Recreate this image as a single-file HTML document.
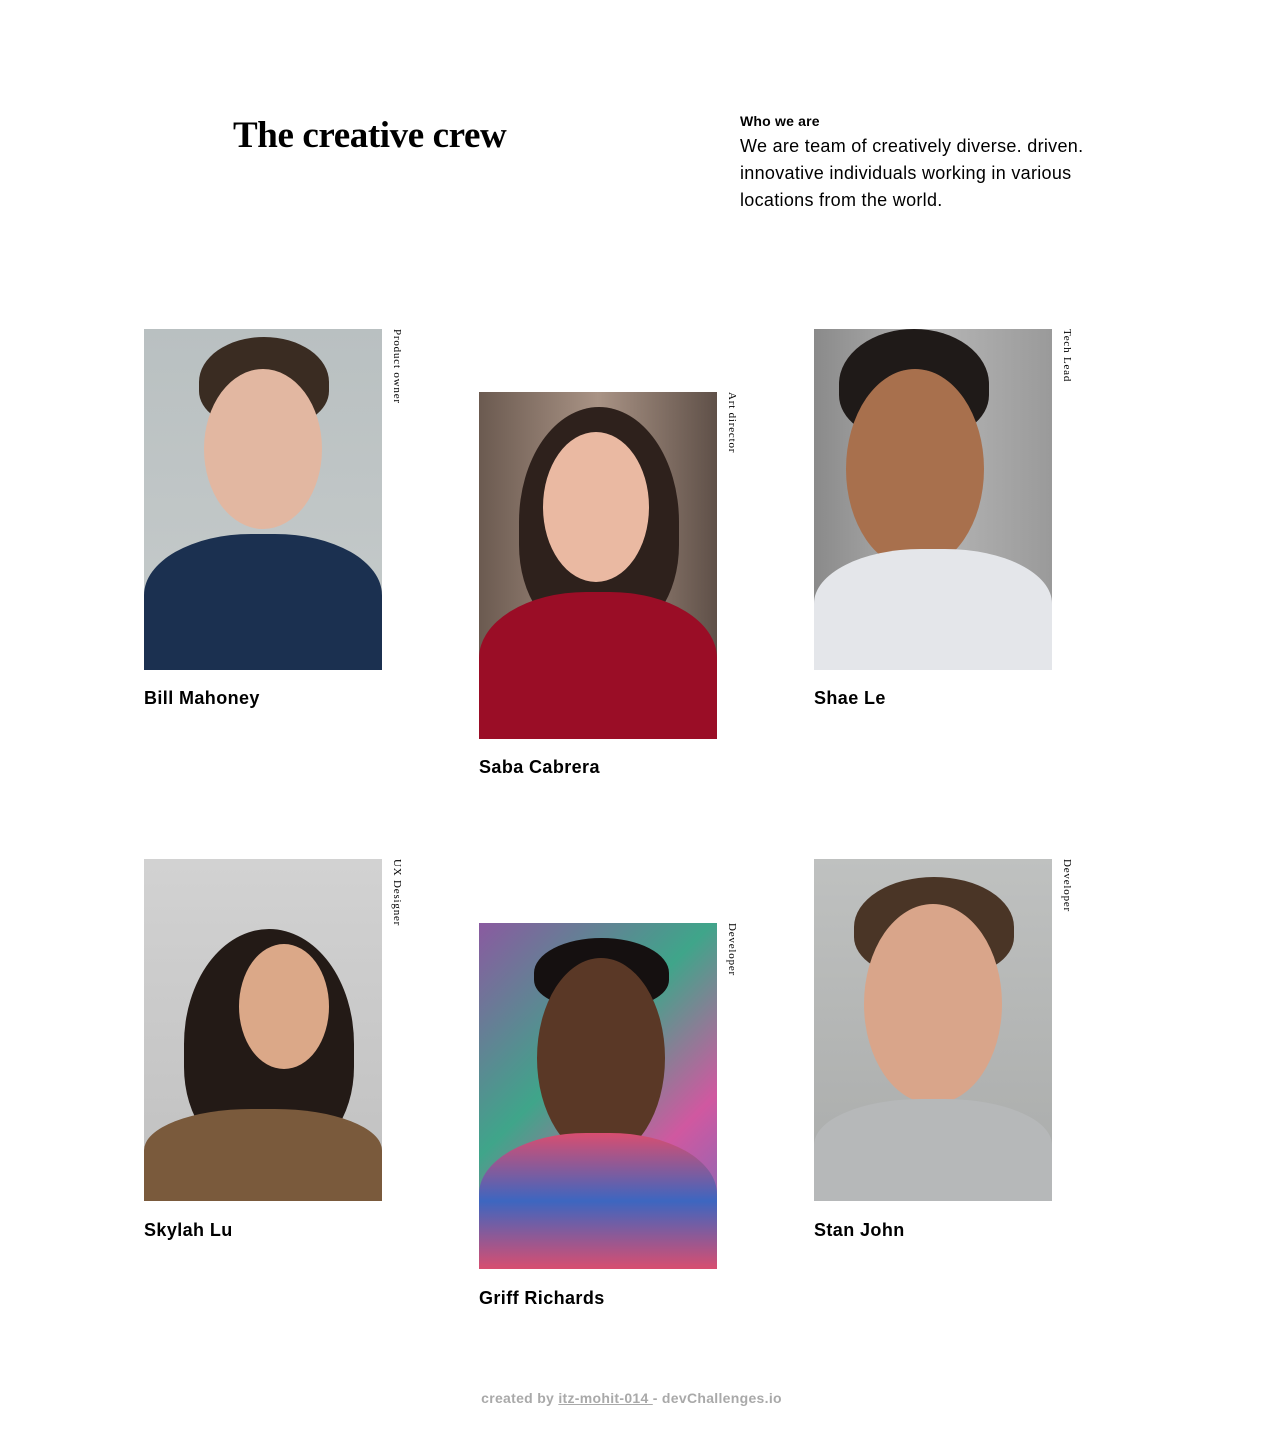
<!DOCTYPE html>
<html><head><meta charset="utf-8"><style>
*{margin:0;padding:0;box-sizing:border-box}
html,body{width:1263px;height:1432px;background:#fff;overflow:hidden}
body{position:relative;font-family:"Liberation Sans",sans-serif;color:#000}
h1{position:absolute;left:233px;top:114px;font-family:"Liberation Serif",serif;font-size:37px;font-weight:700;letter-spacing:-0.4px}
.who{position:absolute;left:740px;top:113px;font-size:14px;font-weight:700;letter-spacing:0.2px}
.desc{position:absolute;left:740px;top:133px;width:375px;font-size:18px;line-height:27px;letter-spacing:0.3px}
.card{position:absolute;width:238px}
.ph{width:238px;position:relative;overflow:hidden}
.role{position:absolute;left:247px;top:0;writing-mode:vertical-rl;font-family:"Liberation Serif",serif;font-size:11px;letter-spacing:0.8px}
.name{position:absolute;left:0;font-size:18px;font-weight:700;white-space:nowrap;letter-spacing:0.4px}
.face{position:absolute;border-radius:50%}
.shirt{position:absolute;left:0;right:0;bottom:0;border-radius:45% 45% 0 0}
.hair{position:absolute;border-radius:50% 50% 40% 40%}
footer{position:absolute;left:0;width:1263px;top:1390px;text-align:center;font-size:14px;font-weight:700;color:#a9a9a9;letter-spacing:0.3px}
footer u{text-decoration:underline}
</style></head><body>
<h1>The creative crew</h1>
<div class="who">Who we are</div>
<div class="desc">We are team of creatively diverse. driven. innovative individuals working in various locations from the world.</div>

<div class="card" style="left:144px;top:329px">
 <div class="ph" style="height:341px;background:linear-gradient(#b9c0c1,#c6cbcb)">
  <div class="hair" style="left:55px;top:8px;width:130px;height:90px;background:#3a2c22"></div>
  <div class="face" style="left:60px;top:40px;width:118px;height:160px;background:#e2b7a1"></div>
  <div class="shirt" style="top:205px;background:#1b3050"></div>
 </div>
 <div class="role">Product owner</div>
 <div class="name" style="top:359px">Bill Mahoney</div>
</div>

<div class="card" style="left:479px;top:392px">
 <div class="ph" style="height:347px;background:linear-gradient(90deg,#6b5a50,#a99385 50%,#5f5048)">
  <div class="hair" style="left:40px;top:15px;width:160px;height:230px;background:#2e211c"></div>
  <div class="face" style="left:64px;top:40px;width:106px;height:150px;background:#eab9a2"></div>
  <div class="shirt" style="top:200px;background:#9a0d26"></div>
 </div>
 <div class="role">Art director</div>
 <div class="name" style="top:365px">Saba Cabrera</div>
</div>

<div class="card" style="left:814px;top:329px">
 <div class="ph" style="height:341px;background:linear-gradient(90deg,#8a8a8a,#b5b5b5 50%,#9a9a9a)">
  <div class="hair" style="left:25px;top:0;width:150px;height:110px;background:#1f1a18"></div>
  <div class="face" style="left:32px;top:40px;width:138px;height:200px;background:#a8704d"></div>
  <div class="shirt" style="top:220px;background:#e4e6ea"></div>
 </div>
 <div class="role">Tech Lead</div>
 <div class="name" style="top:359px">Shae Le</div>
</div>

<div class="card" style="left:144px;top:859px">
 <div class="ph" style="height:342px;background:linear-gradient(#d2d2d2,#c0c0c0)">
  <div class="hair" style="left:40px;top:70px;width:170px;height:230px;background:#231a16"></div>
  <div class="face" style="left:95px;top:85px;width:90px;height:125px;background:#dba888"></div>
  <div class="shirt" style="top:250px;background:#7a5a3c"></div>
 </div>
 <div class="role">UX Designer</div>
 <div class="name" style="top:361px">Skylah Lu</div>
</div>

<div class="card" style="left:479px;top:923px">
 <div class="ph" style="height:346px;background:linear-gradient(135deg,#8a5aa0,#3fa58a 40%,#d058a0 70%,#6a70c0)">
  <div class="hair" style="left:55px;top:15px;width:135px;height:70px;background:#151010"></div>
  <div class="face" style="left:58px;top:35px;width:128px;height:200px;background:#5a3826"></div>
  <div class="shirt" style="top:210px;background:linear-gradient(#d84e70,#3d66c0 50%,#d84e70)"></div>
 </div>
 <div class="role">Developer</div>
 <div class="name" style="top:365px">Griff Richards</div>
</div>

<div class="card" style="left:814px;top:859px">
 <div class="ph" style="height:342px;background:linear-gradient(#bfc1c0,#a9abaa)">
  <div class="hair" style="left:40px;top:18px;width:160px;height:100px;background:#4a3526"></div>
  <div class="face" style="left:50px;top:45px;width:138px;height:200px;background:#d9a58a"></div>
  <div class="shirt" style="top:240px;background:#b6b8b9"></div>
 </div>
 <div class="role">Developer</div>
 <div class="name" style="top:361px">Stan John</div>
</div>

<footer>created by <u>itz-mohit-014 </u> - devChallenges.io</footer>
</body></html>
